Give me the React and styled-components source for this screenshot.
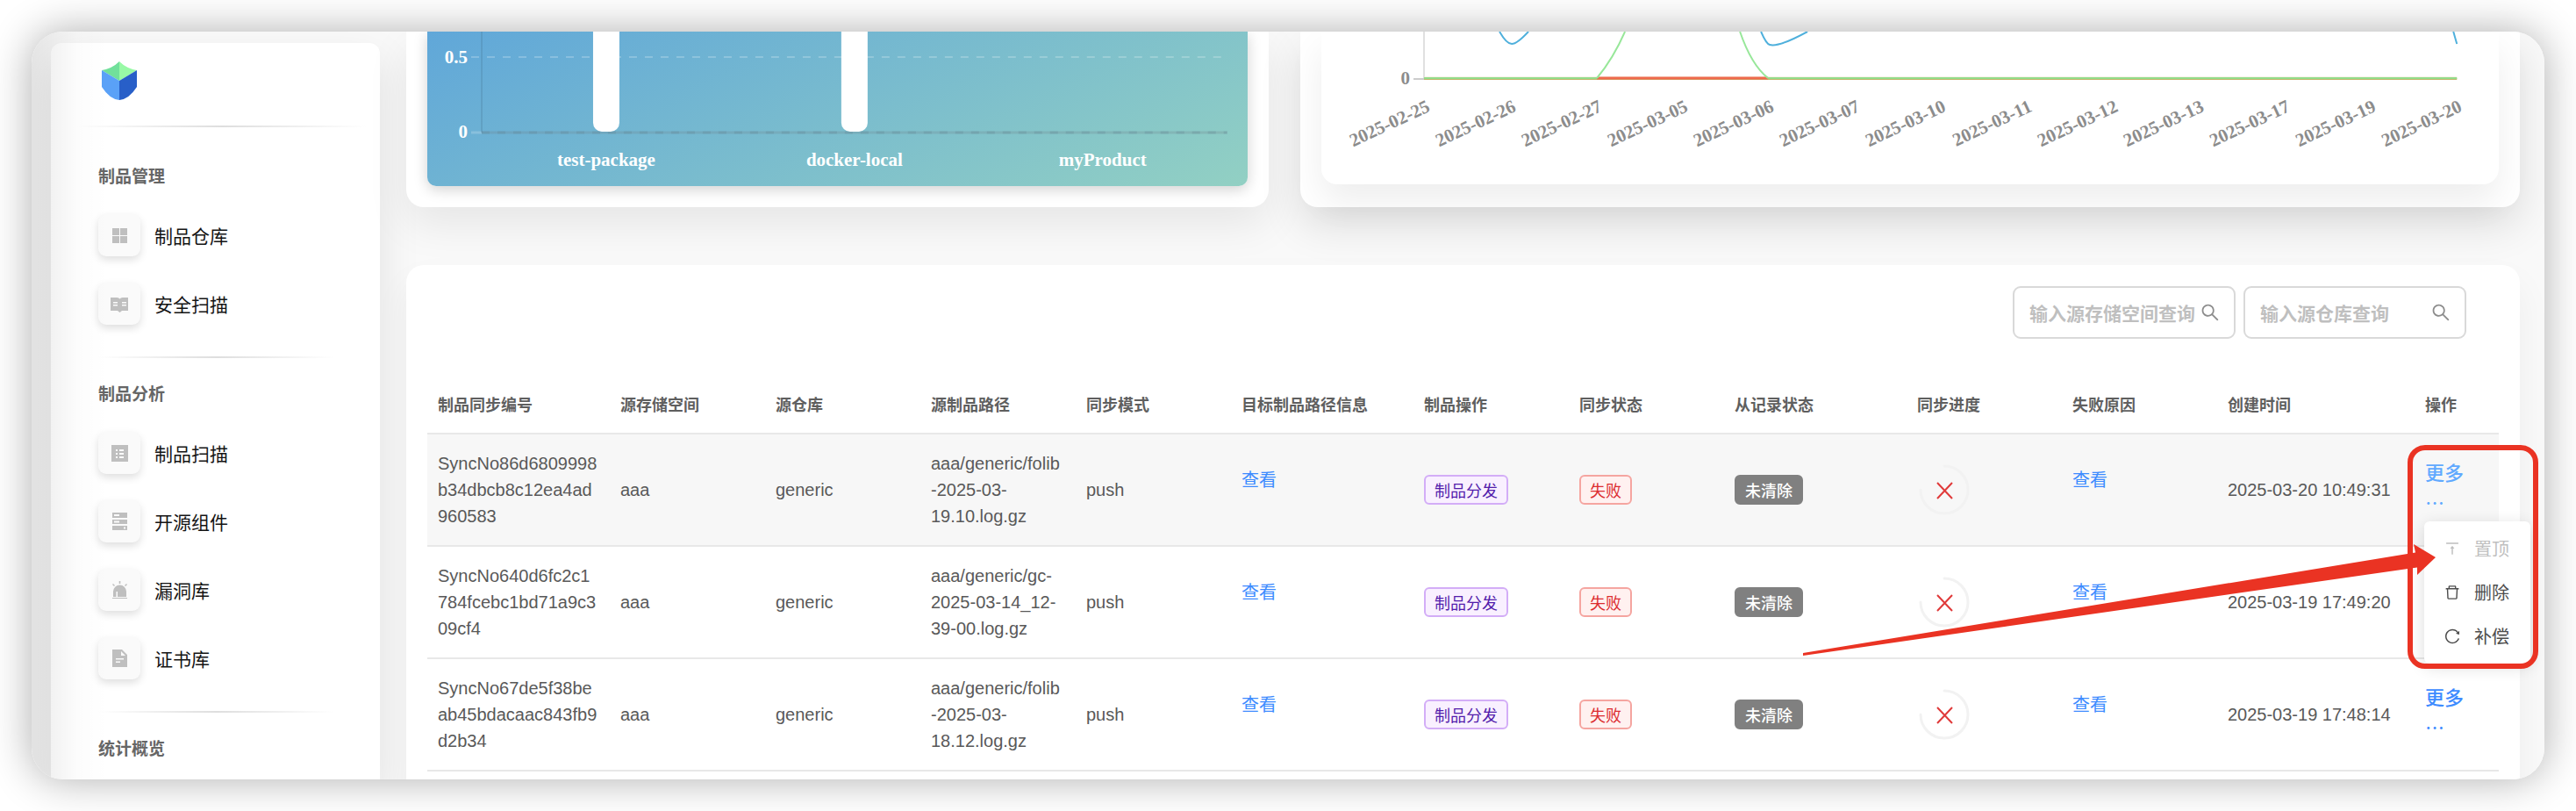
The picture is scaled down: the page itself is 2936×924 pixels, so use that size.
import React from "react";
import styled, { createGlobalStyle, css } from "styled-components";
import {
  AiOutlineDelete,
  AiOutlineReload,
  AiOutlineSearch,
  AiOutlineVerticalAlignTop,
} from "react-icons/ai";

const sans = `"Liberation Sans", "Noto Sans CJK SC", sans-serif`;
const cjk = `"Noto Sans CJK SC", "Liberation Sans", sans-serif`;
const red = "#ea3323";

const GlobalStyle = createGlobalStyle`
  *, *::before, *::after { box-sizing: border-box; }
  body { margin: 0; background: #fff; font-family: ${sans}; color: #595959; }
  button, input { font: inherit; }
`;

const Page = styled.div`
  height: 100vh;
  padding: 36px;
  overflow: hidden;
`;

const Shell = styled.div`
  position: relative;
  display: flex;
  gap: 30px;
  height: 100%;
  padding: 0 28px 0 22px;
  overflow: hidden;
  border-radius: 36px;
  background: #f9f9f9;
`;

const ShellShadow = styled.div`
  height: 100%;
  border-radius: 36px;
  box-shadow: 0 0 48px rgba(0, 0, 0, 0.32);
`;

const LeftShade = styled.div`
  position: absolute;
  inset: 0 auto 0 0;
  width: 88px;
  pointer-events: none;
  background: linear-gradient(to right, rgba(0, 0, 0, 0.08), rgba(0, 0, 0, 0.05) 26%, rgba(0, 0, 0, 0.012) 60%, transparent);
`;

/* ---------- Sidebar ---------- */

const Sidebar = styled.aside`
  flex: 0 0 375px;
  margin-top: 13px;
  padding-top: 21px;
  border-radius: 12px 12px 0 0;
  background: #fff;
  box-shadow: 0 20px 48px rgba(0, 0, 0, 0.1);
`;

const LogoLink = styled.a`
  display: block;
  width: 40px;
  height: 44px;
  margin: 0 0 29px 58px;
`;

const Rule = styled.hr`
  height: 2px;
  margin: ${(p) => (p.$wide ? "0 15px 40px 30px" : "36px 52px 25px 0")};
  border: 0;
  background: linear-gradient(to right, transparent, #dedede, transparent);
`;

const Nav = styled.nav`
  padding-left: 54px;
`;

const NavTitle = styled.h2`
  margin: 0 0 29px;
  font: bold 19px/30px ${cjk};
  color: #666;
`;

const NavList = styled.ul`
  display: flex;
  flex-direction: column;
  gap: 30px;
  margin: 0;
  padding: 0;
  list-style: none;
`;

const NavLink = styled.a`
  display: flex;
  align-items: center;
  gap: 16px;
  font: 21px/30px ${cjk};
  color: #141414;
  text-decoration: none;
`;

const NavIcon = styled.span`
  display: grid;
  place-items: center;
  width: 48px;
  height: 48px;
  border-radius: 9px;
  background: #fafafa;
  box-shadow: 0 4px 10px rgba(0, 0, 0, 0.13);
  color: #bfbfbf;
`;

/* ---------- Content ---------- */

const Main = styled.main`
  flex: 1;
  min-width: 0;
`;

const ChartRow = styled.div`
  display: grid;
  grid-template-columns: repeat(24, minmax(0, 1fr));
  column-gap: 36px;
  margin-bottom: 66px;
`;

const ChartCard = styled.section`
  grid-column: span ${(p) => p.$span};
  height: 200px;
  padding: 0 24px;
  border-radius: 0 0 20px 20px;
  background: #fff;
  box-shadow: 0 20px 48px rgba(0, 0, 0, ${(p) => (p.$deep ? 0.12 : 0.08)});
`;

const BarPanel = styled.div`
  height: 176px;
  border-radius: 0 0 10px 10px;
  background: linear-gradient(155deg, #60a7d9, #92d0c3);
  box-shadow: 0 4px 16px rgba(0, 0, 0, 0.18);
  overflow: hidden;
`;

const LinePanel = styled.div`
  height: 174px;
  border-radius: 0 0 18px 18px;
  background: #fff;
  box-shadow: 0 20px 40px rgba(0, 0, 0, 0.07);
`;

const Chart = styled.svg`
  display: block;
  width: 100%;
  height: auto;
`;

const AxisText = styled.text`
  font: bold 21px "Liberation Serif", serif;
  fill: ${(p) => p.$color};
`;

const TableCard = styled.section`
  position: relative;
  height: 640px;
  padding: 24px 24px 0;
  border-radius: 20px;
  background: #fff;
  box-shadow: 0 20px 40px rgba(0, 0, 0, 0.05);
`;

const Toolbar = styled.form`
  display: flex;
  justify-content: flex-end;
  gap: 9px;
  margin: 0 37px 41px 0;
`;

const SearchBox = styled.label`
  display: flex;
  align-items: center;
  width: 254px;
  height: 60px;
  padding: 0 15px 0 17px;
  border: 2px solid #d9d9d9;
  border-radius: 9px;
  background: #fff;
  svg { flex: none; width: 24px; height: 24px; color: #8c8c8c; }
`;

const SearchInput = styled.input`
  flex: 1;
  min-width: 0;
  padding: 0;
  border: 0;
  outline: 0;
  background: none;
  font: bold 21px/30px ${cjk};
  &::placeholder { color: #bfbfbf; opacity: 1; }
`;

const Table = styled.table`
  width: 100%;
  table-layout: fixed;
  border-collapse: separate;
  border-spacing: 0;
`;

const HeadCell = styled.th`
  padding: 18px 12px;
  border-bottom: 2px solid #e8e8e8;
  font: bold 18px/30px ${cjk};
  color: #5f5f5f;
  text-align: left;
  white-space: nowrap;
`;

const Cell = styled.td`
  position: relative;
  height: 128px;
  padding: 0 12px;
  border-bottom: 2px solid #e8e8e8;
  background: ${(p) => (p.$active ? "#f7f7f7" : "#fff")};
  font-size: 20px;
  line-height: 30px;
  white-space: pre;
  vertical-align: middle;
`;

const ViewLink = styled.a`
  display: block;
  padding-bottom: 24px;
  font: 20px/30px ${cjk};
  color: #3d8bff;
  text-decoration: none;
`;

const tones = {
  purple: css`color: #531dab; background: #f9f0ff; border-color: #d3adf7;`,
  red: css`color: #dc2d30; background: #fff1f0; border-color: #f5a5a0;`,
  gray: css`color: #fff; background: #808080; border-color: #808080; font-weight: 500;`,
};

const Tag = styled.span`
  display: inline-block;
  padding: 0 10px;
  border: 2px solid;
  border-radius: 6px;
  font: 18px/30px ${cjk};
  vertical-align: middle;
  ${(p) => tones[p.$tone]}
`;

const Ring = styled.svg`
  display: block;
  width: 60px;
  height: 58px;
`;

const MoreButton = styled.button`
  display: block;
  padding: 0 0 8px;
  border: 0;
  background: none;
  font: 500 22px/34px ${cjk};
  color: ${(p) => (p.$active ? "#60a9ff" : "#3d8bff")};
  text-align: left;
  span { display: block; font-weight: 400; }
`;

const Menu = styled.div`
  position: absolute;
  z-index: 2;
  top: 99px;
  left: 11px;
  width: 121px;
  padding: 6px 0;
  border-radius: 6px;
  background: #fff;
  box-shadow: 0 4px 18px rgba(0, 0, 0, 0.14);
`;

const MenuItem = styled.button`
  display: flex;
  align-items: center;
  gap: 15px;
  width: 100%;
  height: 50px;
  padding: 0 0 0 22px;
  border: 0;
  background: none;
  font: 20px/30px ${cjk};
  color: #4d4d4d;
  &:disabled { color: #bfbfbf; }
  svg { flex: none; width: 20px; height: 20px; }
`;

const Callout = styled.div`
  position: absolute;
  z-index: 3;
  top: 471px;
  right: 7px;
  width: 149px;
  height: 255px;
  border: 6px solid ${red};
  border-radius: 20px;
  pointer-events: none;
`;

const CalloutArrow = styled.svg`
  position: absolute;
  z-index: 3;
  top: 582px;
  right: 120px;
  width: 726px;
  height: 132px;
  pointer-events: none;
`;

/* ---------- Icons ---------- */

const Logo = () => (
  <svg width="40" height="44" viewBox="0 0 40 44" aria-hidden="true">
    <path d="M0 10 Q12 8 20 0 V22 Z" fill="#71e09b" />
    <path d="M40 10 Q28 8 20 0 V22 Z" fill="#98f9a6" />
    <path d="M0 10 L20 22 V44 Q9 43 0 29 Z" fill="#5aa1f7" />
    <path d="M40 10 L20 22 V44 Q31 43 40 29 Z" fill="#285fc8" />
  </svg>
);

const glyphs = {
  grid: <path d="M2 2h8v8H2zM11 2h8v8h-8zM2 11h8v8H2zM11 11h8v8h-8z" />,
  book: (
    <path
      fillRule="evenodd"
      d="M0 3h7.500q2 0 3 1.500q1-1.500 3-1.500H20v15h-7l-2.500 2L8 18H0zM3 8v1.500h5V8zM3 11v1.500h5V11zM13 8v1.500h5V8zM13 11v1.500h5V11z"
    />
  ),
  list: (
    <path
      fillRule="evenodd"
      d="M1 1h19v19H1zM6 6v2h2V6zM10 6v2h5V6zM6 10v2h2v-2zM10 10v2h5v-2zM6 14v2h2v-2zM10 14v2h5v-2z"
    />
  ),
  server: (
    <path
      fillRule="evenodd"
      d="M2 0h17v6H2zM4 2v2h6V2zM2 8h17v5H2zM4 9.500v2h6v-2zM2 15h17v5H2zM15 16.500v2h2v-2z"
    />
  ),
  alarm: (
    <path
      fillRule="evenodd"
      d="M3 18v-6a7.500 7.500 0 0 1 15 0v6H8v-6H6.500v6zM2 19h17v1H2zM9.700 0h1.600v3H9.700zM2 4l1-1 2 2-1 1zM19 4l-1-1-2 2 1 1z"
    />
  ),
  file: (
    <path
      fillRule="evenodd"
      d="M2 0h11l6 6v14H2zM12 2v5h5zM6 10v1.500h9V10zM6 13.500V15h5v-1.500z"
    />
  ),
};

const Glyph = ({ name }) => (
  <svg width="21" height="21" viewBox="0 0 21 21" fill="currentColor" aria-hidden="true">
    {glyphs[name]}
  </svg>
);

/* ---------- Data ---------- */

const navGroups = [
  { title: "制品管理", items: [["grid", "制品仓库"], ["book", "安全扫描"]] },
  {
    title: "制品分析",
    items: [
      ["list", "制品扫描"],
      ["server", "开源组件"],
      ["alarm", "漏洞库"],
      ["file", "证书库"],
    ],
  },
  { title: "统计概览", items: [] },
];

const columns = [
  ["制品同步编号", 208],
  ["源存储空间", 177],
  ["源仓库", 177],
  ["源制品路径", 177],
  ["同步模式", 177],
  ["目标制品路径信息", 208],
  ["制品操作", 177],
  ["同步状态", 177],
  ["从记录状态", 208],
  ["同步进度", 177],
  ["失败原因", 177],
  ["创建时间", 225],
  ["操作", 96],
];
const columnTotal = columns.reduce((sum, [, w]) => sum + w, 0);

const rows = [
  {
    id: "SyncNo86d6809998\nb34dbcb8c12ea4ad\n960583",
    path: "aaa/generic/folib\n-2025-03-\n19.10.log.gz",
    time: "2025-03-20 10:49:31",
    active: true,
  },
  {
    id: "SyncNo640d6fc2c1\n784fcebc1bd71a9c3\n09cf4",
    path: "aaa/generic/gc-\n2025-03-14_12-\n39-00.log.gz",
    time: "2025-03-19 17:49:20",
  },
  {
    id: "SyncNo67de5f38be\nab45bdacaac843fb9\nd2b34",
    path: "aaa/generic/folib\n-2025-03-\n18.12.log.gz",
    time: "2025-03-19 17:48:14",
  },
];

const bars = [
  { name: "test-package", x: 204, filled: true },
  { name: "docker-local", x: 487, filled: true },
  { name: "myProduct", x: 770, filled: false },
];

const dates = [
  "2025-02-25", "2025-02-26", "2025-02-27", "2025-03-05", "2025-03-06",
  "2025-03-07", "2025-03-10", "2025-03-11", "2025-03-12", "2025-03-13",
  "2025-03-17", "2025-03-19", "2025-03-20",
];

/* ---------- Parts ---------- */

const BarChart = () => (
  <Chart viewBox="0 0 935 176">
    <path d="M50 29H912" stroke="#fff" strokeOpacity="0.22" strokeWidth="2" strokeDasharray="9 9" />
    <path d="M50 115H62" stroke="#fff" strokeOpacity="0.2" strokeWidth="3" />
    <path d="M62 115H912" stroke="#6e7f88" strokeOpacity="0.25" strokeWidth="3" />
    <path d="M62 115H912" stroke="#5d7f90" strokeOpacity="0.25" strokeWidth="3" strokeDasharray="9 9" />
    <path d="M62 0V115" stroke="#44718f" strokeOpacity="0.5" strokeWidth="1" />
    <AxisText x="46" y="36" textAnchor="end" $color="#fff">0.5</AxisText>
    <AxisText x="46" y="121" textAnchor="end" $color="#fff">0</AxisText>
    {bars.map((b) => (
      <React.Fragment key={b.name}>
        {b.filled && <rect x={b.x - 15} y="-30" width="30" height="144" rx="10" fill="#fff" />}
        <AxisText x={b.x} y="153" textAnchor="middle" $color="#fff">{b.name}</AxisText>
      </React.Fragment>
    ))}
  </Chart>
);

const LineChart = () => (
  <Chart viewBox="0 0 1342 174" fill="none">
    <path d="M117 0V53" stroke="#e0e0e0" strokeWidth="2" />
    <path d="M105 54H117" stroke="#ccc" strokeWidth="2" />
    <path d="M117 53H1294" stroke="#efe3d0" strokeWidth="3" />
    <path d="M117 54H1294" stroke="#c3b56c" strokeWidth="2" />
    <path d="M117 53H314M509 53H1294" stroke="#93dc8a" strokeWidth="2" />
    <path d="M314 53H509" stroke="#ee6a4d" strokeWidth="3" />
    <path d="M314 53Q333 30 346 0M477 0Q490 38 509 53" stroke="#98e79a" strokeWidth="2" />
    <path
      d="M203 0Q211 14 217 14Q223 14 236 0M501 0Q507 14 511 15Q521 18 554 0M1290 0L1294 14"
      stroke="#4fb0dc"
      strokeWidth="2"
    />
    <AxisText x="101" y="60" textAnchor="end" $color="#8c8c8c">0</AxisText>
    {dates.map((d, i) => (
      <AxisText
        key={d}
        textAnchor="end"
        $color="#8c8c8c"
        transform={`translate(${125 + i * 98} 90) rotate(-25)`}
      >
        {d}
      </AxisText>
    ))}
  </Chart>
);

const FailedRing = () => (
  <Ring viewBox="0 0 60 58" fill="none" role="img" aria-label="失败">
    <path
      d="M31 2A27 27 0 1 1 4 29"
      stroke="#f2f2f2"
      strokeWidth="3"
      strokeLinecap="round"
    />
    <path d="M23 21L40 39M40 21L23 39" stroke="#e03a3a" strokeWidth="2" />
  </Ring>
);

const Search = ({ placeholder }) => (
  <SearchBox>
    <SearchInput type="text" placeholder={placeholder} aria-label={placeholder} />
    <AiOutlineSearch />
  </SearchBox>
);

const SyncRow = ({ row }) => (
  <tr>
    <Cell $active={row.active}>{row.id}</Cell>
    <Cell $active={row.active}>aaa</Cell>
    <Cell $active={row.active}>generic</Cell>
    <Cell $active={row.active}>{row.path}</Cell>
    <Cell $active={row.active}>push</Cell>
    <Cell $active={row.active}><ViewLink href="#target">查看</ViewLink></Cell>
    <Cell $active={row.active}><Tag $tone="purple">制品分发</Tag></Cell>
    <Cell $active={row.active}><Tag $tone="red">失败</Tag></Cell>
    <Cell $active={row.active}><Tag $tone="gray">未清除</Tag></Cell>
    <Cell $active={row.active}><FailedRing /></Cell>
    <Cell $active={row.active}><ViewLink href="#reason">查看</ViewLink></Cell>
    <Cell $active={row.active}>{row.time}</Cell>
    <Cell $active={row.active}>
      <MoreButton type="button" $active={row.active}>更多<span>…</span></MoreButton>
      {row.active && (
        <Menu>
          <MenuItem type="button" disabled><AiOutlineVerticalAlignTop />置顶</MenuItem>
          <MenuItem type="button"><AiOutlineDelete />删除</MenuItem>
          <MenuItem type="button"><AiOutlineReload />补偿</MenuItem>
        </Menu>
      )}
    </Cell>
  </tr>
);

export default function App() {
  return (
    <Page>
      <GlobalStyle />
      <ShellShadow>
        <Shell>
          <Sidebar>
            <LogoLink href="#home" aria-label="Home"><Logo /></LogoLink>
            <Rule $wide />
            <Nav>
              {navGroups.map((group, i) => (
                <React.Fragment key={group.title}>
                  {i > 0 && <Rule />}
                  <NavTitle>{group.title}</NavTitle>
                  <NavList>
                    {group.items.map(([icon, label]) => (
                      <li key={label}>
                        <NavLink href={`#${icon}`}>
                          <NavIcon><Glyph name={icon} /></NavIcon>
                          {label}
                        </NavLink>
                      </li>
                    ))}
                  </NavList>
                </React.Fragment>
              ))}
            </Nav>
          </Sidebar>

          <Main>
            <ChartRow>
              <ChartCard $span={10}>
                <BarPanel><BarChart /></BarPanel>
              </ChartCard>
              <ChartCard $span={14} $deep>
                <LinePanel><LineChart /></LinePanel>
              </ChartCard>
            </ChartRow>

            <TableCard>
              <Toolbar>
                <Search placeholder="输入源存储空间查询" />
                <Search placeholder="输入源仓库查询" />
              </Toolbar>
              <Table>
                <colgroup>
                  {columns.map(([name, w]) => (
                    <col key={name} style={{ width: `${(w / columnTotal) * 100}%` }} />
                  ))}
                </colgroup>
                <thead>
                  <tr>
                    {columns.map(([name]) => (
                      <HeadCell key={name} scope="col">{name}</HeadCell>
                    ))}
                  </tr>
                </thead>
                <tbody>
                  {rows.map((row) => <SyncRow key={row.time} row={row} />)}
                </tbody>
              </Table>
            </TableCard>
          </Main>

          <LeftShade />
          <Callout />
          <CalloutArrow viewBox="0 0 726 132" aria-hidden="true">
            <path d="M1 126L699 11.500L697 2L722 17L701 37L701 28.500L1 129Z" fill={red} />
          </CalloutArrow>
        </Shell>
      </ShellShadow>
    </Page>
  );
}
